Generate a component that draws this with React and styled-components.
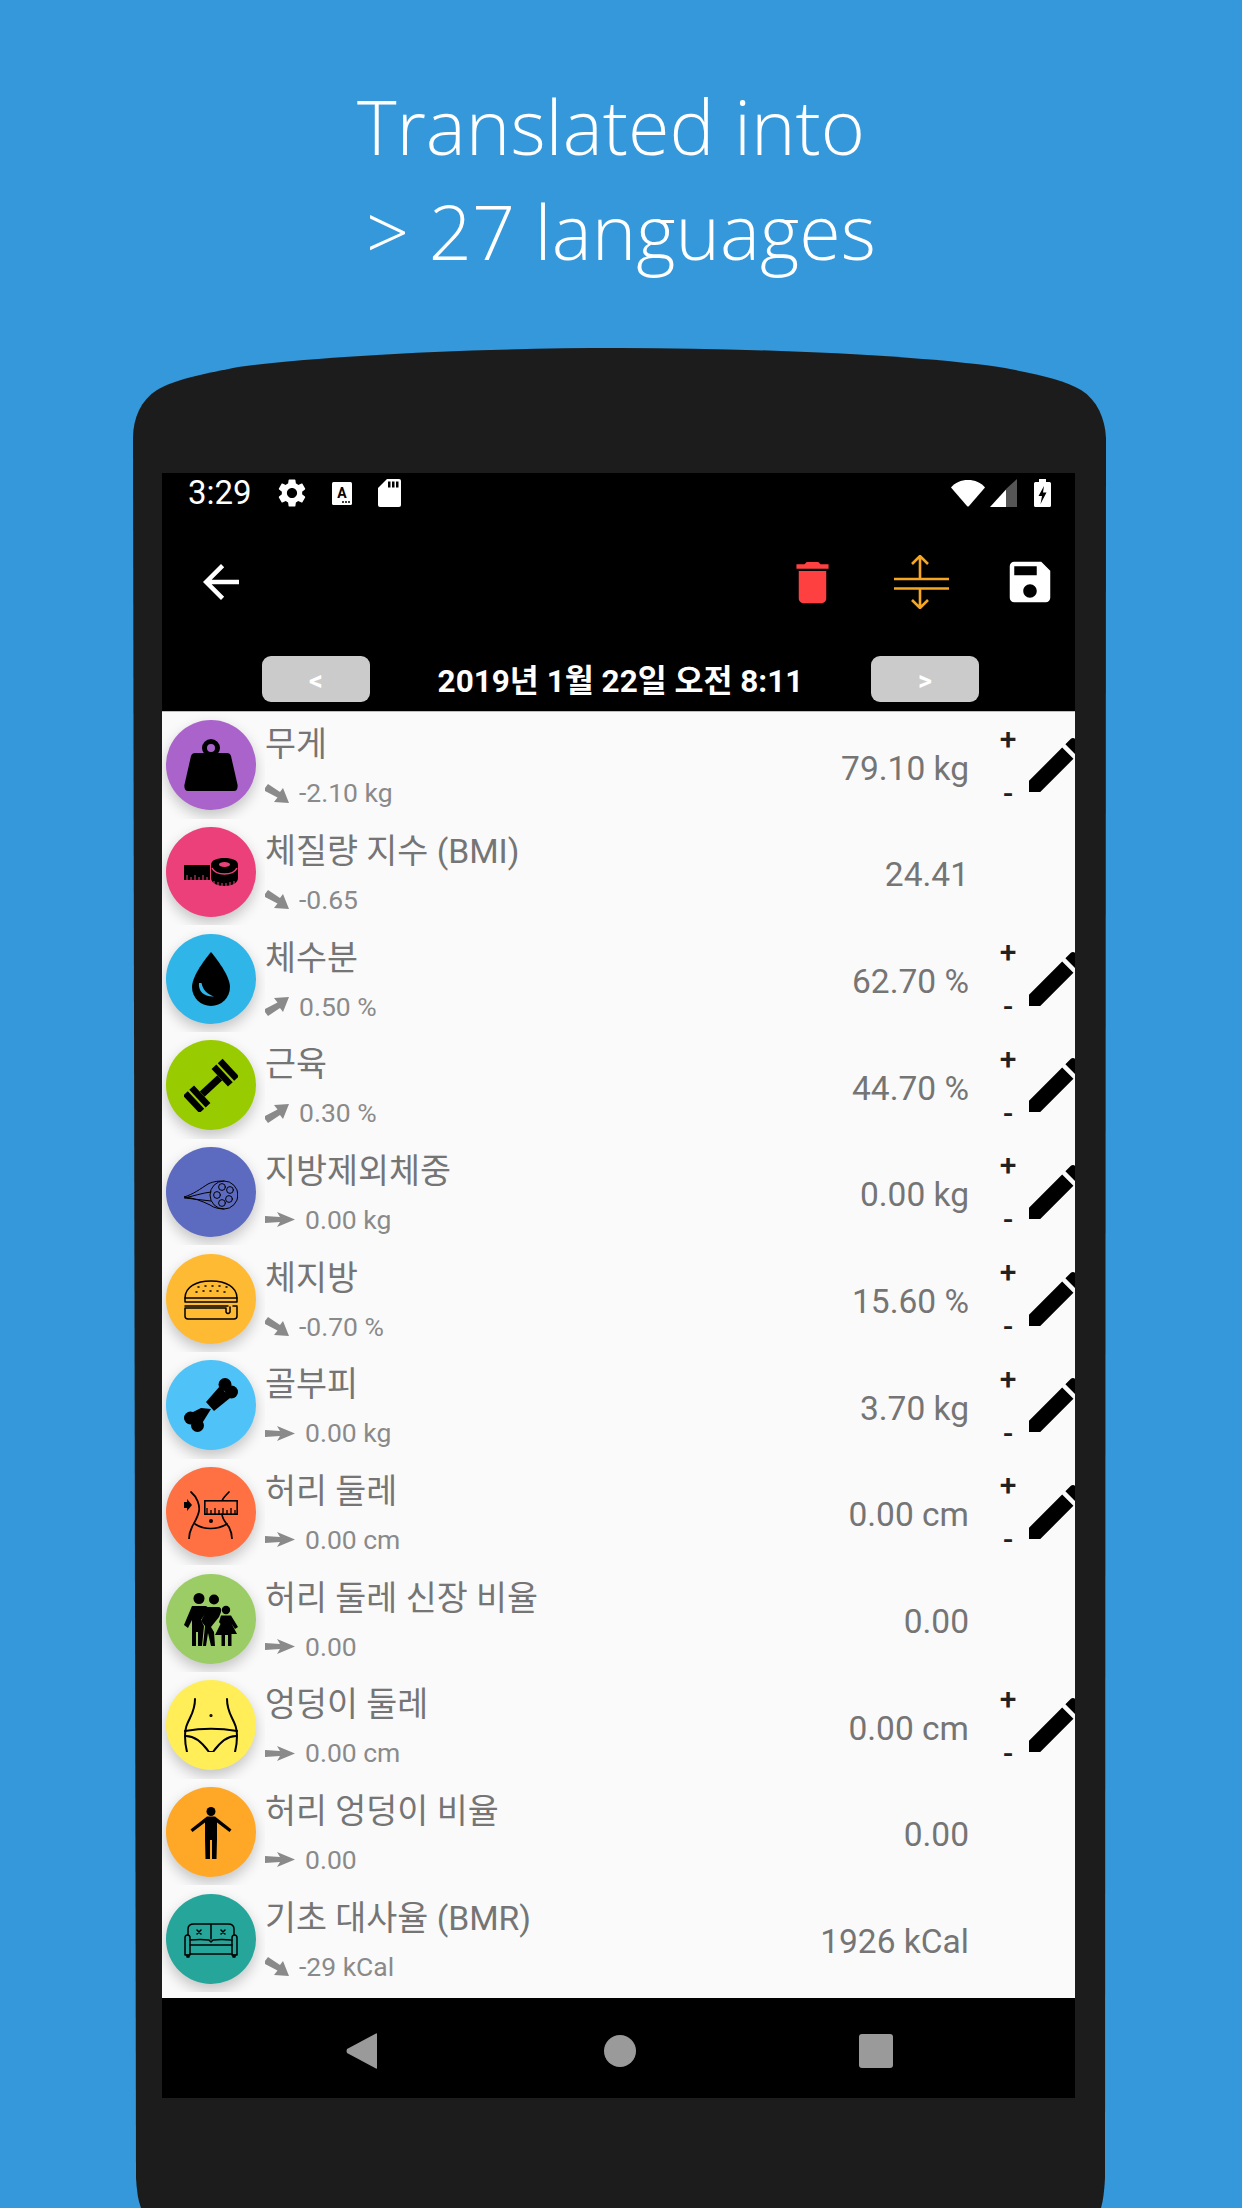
import React from 'react'
import styled, { createGlobalStyle } from 'styled-components'

const GlobalStyle = createGlobalStyle`
  html, body {
    margin: 0;
    padding: 0;
    background: #3498db;
  }
  body {
    width: 1242px;
    height: 2208px;
    overflow: hidden;
    font-family: Roboto, "Noto Sans CJK KR", sans-serif;
  }
`;

const Page = styled.div`
  width: 1242px;
  height: 2208px;
  background: #3498db;
  overflow: hidden;
  display: flex;
  flex-direction: column;
`;

const Headline = styled.header`
  height: 348px;
  flex-shrink: 0;
  padding-top: 73px;
  box-sizing: border-box;
  color: #fff;
  font-family: "Open Sans", sans-serif;
  font-weight: 300;
  font-size: 75.5px;
  line-height: 105px;
  text-align: center;
`;

const HeadLine = styled.div`
  padding-right: ${p => p.$shift || 0}px;
`;

const Phone = styled.div`
  margin-left: 133px;
  width: 973px;
  height: 1860px;
  flex-shrink: 0;
  background: #1c1c1c;
  padding: 125px 0 0 29px;
  box-sizing: border-box;
  clip-path: path('M3 1830 L0 90 C0 70 8 52 24 42 C40 32 70 26 100 20 C170 9 330 0 486 0 C642 0 802 9 872 20 C902 26 932 32 948 42 C964 52 972 70 973 90 L972 1830 Q971 1850 968 1860 L8 1860 Q4 1850 3 1830 Z');
`;

const Screen = styled.div`
  width: 913px;
  height: 1625px;
  background: #000;
  display: flex;
  flex-direction: column;
  overflow: hidden;
`;

const StatusBar = styled.div`
  height: 40px;
  flex-shrink: 0;
  display: flex;
  align-items: center;
  padding: 0 24px 0 26px;
  color: #fff;
`;

const Clock = styled.span`
  font-size: 33px;
  line-height: 40px;
  margin-right: 23px;
`;

const StatusLeft = styled.div`
  display: flex;
  align-items: center;
  gap: 23px;
`;

const StatusRight = styled.div`
  margin-left: auto;
  display: flex;
  align-items: center;
  gap: 5px;
`;

const Toolbar = styled.div`
  height: 138px;
  flex-shrink: 0;
  display: flex;
  align-items: center;
  padding: 0 18px 0 32px;
`;

const ToolActions = styled.div`
  margin-left: auto;
  display: flex;
  align-items: center;
  gap: 54px;
`;

const DateRow = styled.div`
  height: 60px;
  flex-shrink: 0;
  box-sizing: border-box;
  padding: 5px 96px 0 100px;
  display: flex;
  justify-content: space-between;
  align-items: flex-start;
`;

const DateButton = styled.div`
  width: 108px;
  height: 46px;
  background: #cbcbcb;
  border-radius: 9px;
  color: #fff;
  font-weight: 700;
  font-size: 27px;
  line-height: 50px;
  text-align: center;
`;

const DateLabel = styled.div`
  color: #fff;
  font-weight: 700;
  font-size: 31.5px;
  line-height: 46px;
  padding-top: 3px;
`;

const List = styled.div`
  flex: 1;
  background: #fafafa;
  border-top: 1px solid #bdbdbd;
`;

const Row = styled.div`
  height: 106.67px;
  display: flex;
  align-items: center;
  overflow: hidden;
`;

const IconCell = styled.div`
  width: 103px;
  height: 100%;
  flex-shrink: 0;
  overflow: hidden;
  display: flex;
  align-items: center;
  padding-left: 4px;
  box-sizing: border-box;
`;

const Circle = styled.div`
  width: 90px;
  height: 90px;
  border-radius: 50%;
  background: ${p => p.$color};
  box-shadow: 0 6px 14px rgba(0, 0, 0, 0.22);
  display: flex;
  align-items: center;
  justify-content: center;
  flex-shrink: 0;
`;

const Texts = styled.div`
  flex: 1;
  min-width: 0;
  padding-top: 6px;
`;

const Title = styled.div`
  color: #757575;
  font-size: 33.7px;
  line-height: 46px;
  padding-top: 4px;
`;

const Sub = styled.div`
  color: #8a8a8a;
  font-size: 26.5px;
  line-height: 50px;
  display: flex;
  align-items: center;
  gap: 10px;
`;

const Value = styled.div`
  color: #757575;
  font-size: 33.5px;
  padding-top: 6px;
  white-space: nowrap;
`;

const Actions = styled.div`
  width: 106px;
  height: 100%;
  flex-shrink: 0;
  box-sizing: border-box;
  padding-left: 19px;
  display: flex;
  align-items: center;
`;

const Stepper = styled.div`
  width: 40px;
  flex-shrink: 0;
  display: flex;
  flex-direction: column;
  align-items: center;
  gap: 15px;
  padding-top: 2px;
  color: #212121;
  font-size: 30px;
  font-weight: 500;
  line-height: 40px;
`;

const Pen = styled.svg`
  width: 72px;
  height: 72px;
  flex-shrink: 0;
  margin-left: -8px;
`;

const NavBar = styled.div`
  height: 100px;
  flex-shrink: 0;
  display: flex;
  align-items: center;
  padding: 6px 0 0 184px;
  box-sizing: border-box;
`;

const NavCircle = styled.div`
  width: 32px;
  height: 32px;
  border-radius: 50%;
  background: #9a9a9a;
  margin-left: 227px;
`;

const NavSquare = styled.div`
  width: 34px;
  height: 34px;
  border-radius: 3px;
  background: #9a9a9a;
  margin-left: 223px;
`;

const SdCard = styled.svg`
  margin-left: 3px;
`;

const BatteryShape = styled.svg`
  margin-left: 12px;
`;

const Glyph = ({ size, color = '#fff', d }) => (
  <svg width={size} height={size} viewBox="0 0 24 24" fill={color}><path d={d} /></svg>
);

const GEAR = 'M19.14 12.94c.04-.3.06-.61.06-.94 0-.32-.02-.64-.07-.94l2.03-1.58c.18-.14.23-.41.12-.61l-1.92-3.32c-.12-.22-.37-.29-.59-.22l-2.39.96c-.5-.38-1.03-.7-1.62-.94l-.36-2.54c-.04-.24-.24-.41-.48-.41h-3.84c-.24 0-.43.17-.47.41l-.36 2.54c-.59.24-1.13.57-1.62.94l-2.39-.96c-.22-.08-.47 0-.59.22L2.74 8.87c-.12.21-.08.47.12.61l2.03 1.58c-.05.3-.09.63-.09.94s.02.64.07.94l-2.03 1.58c-.18.14-.23.41-.12.61l1.92 3.32c.12.22.37.29.59.22l2.39-.96c.5.38 1.03.7 1.62.94l.36 2.54c.05.24.24.41.48.41h3.84c.24 0 .44-.17.47-.41l.36-2.54c.59-.24 1.13-.56 1.62-.94l2.39.96c.22.08.47 0 .59-.22l1.92-3.32c.12-.22.07-.47-.12-.61l-2.01-1.58zM12 15.6c-1.98 0-3.6-1.62-3.6-3.6s1.62-3.6 3.6-3.6 3.6 1.62 3.6 3.6-1.62 3.6-3.6 3.6z';
const BACK = 'M20 11H7.83l5.59-5.59L12 4l-8 8 8 8 1.41-1.41L7.83 13H20v-2z';
const TRASH = 'M6 19c0 1.1.9 2 2 2h8c1.1 0 2-.9 2-2V7H6v12zM19 4h-3.5l-1-1h-5l-1 1H5v2h14V4z';
const SAVE = 'M17 3H5c-1.11 0-2 .9-2 2v14c0 1.1.89 2 2 2h14c1.1 0 2-.9 2-2V7l-4-4zm-5 16c-1.66 0-3-1.34-3-3s1.34-3 3-3 3 1.34 3 3-1.34 3-3 3zm3-10H5V5h10v4z';
const EDIT = 'M3 17.25V21h3.75L17.81 9.94l-3.75-3.75L3 17.25zM20.71 7.04c.39-.39.39-1.02 0-1.41l-2.34-2.34c-.39-.39-1.02-.39-1.41 0l-1.83 1.83 3.75 3.75 1.83-1.83z';

const KeyboardIcon = () => (
  <svg width="20" height="23" viewBox="0 0 20 23">
    <rect width="20" height="23" rx="1.5" fill="#fff" />
    <text x="10" y="16" textAnchor="middle" fontFamily="Roboto" fontWeight="700" fontSize="14" fill="#000">A</text>
    <circle cx="11" cy="20" r="1" fill="#000" /><circle cx="14" cy="20" r="1" fill="#000" /><circle cx="17" cy="20" r="1" fill="#000" />
  </svg>
);

const SdIcon = () => (
  <SdCard width="23" height="28" viewBox="0 0 23 28">
    <path d="M9 0H21a2 2 0 0 1 2 2V26a2 2 0 0 1-2 2H2a2 2 0 0 1-2-2V9Z" fill="#fff" />
    <path d="M10 2.5h2.5v6H10ZM14 2.5h2.5v6H14ZM18 2.5h2.5v6H18Z" fill="#000" />
  </SdCard>
);

const WifiIcon = () => (
  <svg width="34" height="27" viewBox="0 0 34 27">
    <path d="M0 7.5C4 2.5 10 0 17 0s13 2.5 17 7.5L18 26a1.4 1.4 0 0 1-2 0Z" fill="#fff" />
  </svg>
);

const SignalIcon = () => (
  <svg width="27" height="28" viewBox="0 0 27 28">
    <path d="M27 0V28H16V10Z" fill="#555" />
    <path d="M16 10.5V28H0Z" fill="#fff" />
  </svg>
);

const BatteryIcon = () => (
  <BatteryShape width="17" height="28" viewBox="0 0 17 28">
    <path d="M5 0H12V3H15.5A1.5 1.5 0 0 1 17 4.5V26.5A1.5 1.5 0 0 1 15.5 28H1.5A1.5 1.5 0 0 1 0 26.5V4.5A1.5 1.5 0 0 1 1.5 3H5Z" fill="#fff" />
    <path d="M10 7 4.5 17H8L6.5 25 12.5 13.5H9Z" fill="#000" />
  </BatteryShape>
);

const SplitIcon = () => (
  <svg width="55" height="54" viewBox="0 0 55 54" fill="none" stroke="#f5a623" strokeWidth="2.6">
    <path d="M0 24H55M0 33.5H55" />
    <path d="M26 24V1M18 9l8-8 8 8M26 33.5V53M18 45l8 8 8-8" />
  </svg>
);

const TrendShape = styled.svg`
  transform: ${p => (p.$up ? 'scaleY(-1)' : 'none')};
`;

const Trend = ({ dir }) => {
  if (dir === 'flat') {
    return (
      <svg width="30" height="15" viewBox="0 0 30 15" fill="#8a8a8a">
        <path d="M0 4 15 5 12 0 30 7.5 12 15 15 10 0 11Z" />
      </svg>
    );
  }
  return (
    <TrendShape $up={dir === 'up'} width="24" height="19" viewBox="0 0 24 19" fill="#8a8a8a">
      <path d="M0 4 3 0 15 8 18 4 24 19 9 18 12.5 13.5 0 7Z" />
    </TrendShape>
  );
};

// circle glyphs, all on a 54 x 54 box
const s = { fill: 'none', stroke: '#000', strokeLinecap: 'round', strokeLinejoin: 'round' };

const icons = {
  weight: (
    <>
      <circle cx="27" cy="10" r="6.5" fill="none" stroke="#000" strokeWidth="5" />
      <path d="M11 15H43Q46 15 47 18L53.6 47Q54 53 50 53H4Q0 53 .4 47L7 18Q8 15 11 15Z" />
    </>
  ),
  tape: (
    <>
      <path d="M0 20H26V35H0Z" />
      <path d="M3 30v5M7 32v3M11 30v5M15 32v3M19 30v5M23 32v3" stroke="#ec407a" strokeWidth="1" />
      <path d="M27 20C27 15 33 13 40.5 13S54 15 54 20V33C54 38 48 41 40.5 41S27 38 27 33Z" />
      <path d="M28 23C30 27 35 29 40.5 29S51 27 53 23" fill="none" stroke="#ec407a" strokeWidth="1.6" />
      <ellipse cx="40.5" cy="19.5" rx="5.5" ry="2.6" fill="#ec407a" />
      <path d="M30 36v4M34 37v4M38 38v3M42 38v3M46 37v4M50 36v4" stroke="#ec407a" strokeWidth="1" />
    </>
  ),
  drop: (
    <>
      <path d="M27 0C27 0 8 22 8 35A19 19 0 0 0 46 35C46 22 27 0 27 0Z" />
      <path d="M15 31C14 39 20 45 30 44.5C23 42 19 38 17.5 31Z" fill="#2fb5e8" />
    </>
  ),
  dumbbell: (
    <g transform="rotate(-43 27 28)">
      <rect x="15" y="24.5" width="24" height="7" />
      <rect x="39" y="16" width="6.5" height="24" />
      <rect x="47.5" y="16" width="6.5" height="24" />
      <rect x="8.5" y="16" width="6.5" height="24" />
      <rect x="0" y="16" width="6.5" height="24" />
    </g>
  ),
  muscle: (
    <g {...s} strokeWidth="1">
      <circle cx="40" cy="30" r="14" />
      <path d="M0 32C10 29 16 24 24 19C30 16 36 16 40 16M0 32C10 33 18 36 26 40C30 43 36 44 40 44M0 33C10 31 18 28 27 27M1 33C10 34 18 35 27 36" />
      <circle cx="38" cy="22" r="3.4" />
      <circle cx="46" cy="25" r="3.4" />
      <circle cx="33" cy="30" r="3.4" />
      <circle cx="45" cy="34" r="3.4" />
      <circle cx="38" cy="38" r="3.4" />
    </g>
  ),
  burger: (
    <g {...s} strokeWidth="1.5">
      <path d="M1 26C1 15 12 9 27 9S53 15 53 26Z" />
      <path d="M1 26V30H53V26M1 34H44M49 34H53" />
      <path d="M1 36V44Q1 47 4 47H50Q53 47 53 44V35M1 36H42V40Q44 43 46 40V35" />
      <path d="M14 15h1M21 14h1M28 14h1M35 14h1M42 15h1M12 20h1M19 19h1M26 19h1M33 19h1M40 20h1" strokeDasharray="1 2" />
    </g>
  ),
  bone: (
    <>
      <circle cx="41" cy="6.5" r="6.5" />
      <circle cx="47.5" cy="14" r="6.5" />
      <path d="M36 8 46 20 30 33 22 24Z" />
      <circle cx="6.5" cy="40" r="6.5" />
      <circle cx="13.5" cy="47.5" r="6.5" />
      <path d="M5 36 17 30 27 31 17 47 10 48Z" />
    </>
  ),
  waist: (
    <>
      <path d="M0 17H3V14L8 20 3 26V23H0Z" />
      <g {...s} strokeWidth="1.7">
        <path d="M7 7C13 12 16 20 15 26C14 32 10 38 8 42C6 46 5 50 5 54" />
        <path d="M45 7C42 10 39 13 38.5 15M38 29C38 34 42 38 45 42C47 46 48 50 48 54" />
        <path d="M11 39C20 45 33 45 43 39" />
      </g>
      <rect x="20.8" y="15.8" width="32.4" height="13.4" fill="none" stroke="#000" strokeWidth="1.6" />
      <path d="M23 29v-6M27 29v-4M31 29v-6M35 29v-4M39 29v-6M43 29v-4M47 29v-6M51 29v-4" stroke="#000" strokeWidth="1.3" />
      <circle cx="27" cy="36" r="2" />
    </>
  ),
  family: (
    <>
      <circle cx="15" cy="6.5" r="5.5" />
      <circle cx="30" cy="7.5" r="5" />
      <circle cx="42" cy="18" r="4.2" />
      <path d="M8 14H22L25 16 17 28 20 34 18 54H14V40H12V54H8V28L4 36 0 33Z" />
      <path d="M24 15H34Q38 15 37 20L35 25 27 35 30 40 31 54H27L24 41 22 54H19L21 34 17 29Z" />
      <path d="M37 23.5H47L54 35 51 37 47.5 31.5 53 42H47.5V54H44V43H41V54H37.5V43H31L36.5 32 35 30Z" />
    </>
  ),
  hips: (
    <g {...s} strokeWidth="2">
      <path d="M11 1C11 8 9 14 6 20C3 26 1 30 1 38C1 44 2 50 3 54" />
      <path d="M43 1C43 8 45 14 48 20C51 26 53 30 53 38C53 44 52 50 51 54" />
      <path d="M1 33C18 30 36 30 53 33M2 38C10 38 18 44 25 54M52 38C44 38 36 44 29 54M25 54H29" />
      <circle cx="27" cy="17.5" r=".6" fill="#000" />
    </g>
  ),
  person: (
    <>
      <circle cx="27" cy="6.5" r="4.5" />
      <path d="M23 11.5H31L47.5 24.5 45.5 27 33 17.5V34L32.5 54H28V35H26V54H21.5L21 34V17.5L8.5 27 6.5 24.5Z" />
    </>
  ),
  sofa: (
    <g {...s} strokeWidth="1.5">
      <path d="M4 23V17Q4 12 10 12H44Q50 12 50 17V23M27 12V27" />
      <path d="M1 26Q1 23 3.5 23Q6 23 6 26V43H1ZM48 26Q48 23 50.5 23Q53 23 53 26V43H48Z" />
      <path d="M6 28Q17 27 25 28L27 30 29 28Q37 27 48 28M6 33H48M6 42H48M3 43V45H5V43M49 43V45H51V43" />
      <path d="M13 18l4 4m0-4l-4 4M37 18l4 4m0-4l-4 4" />
    </g>
  ),
};

const rows = [
  { color: '#ab63cc', icon: 'weight', title: '무게', trend: 'down', sub: '-2.10 kg', value: '79.10 kg', edit: true },
  { color: '#ec407a', icon: 'tape', title: '체질량 지수 (BMI)', trend: 'down', sub: '-0.65', value: '24.41' },
  { color: '#2fb5e8', icon: 'drop', title: '체수분', trend: 'up', sub: '0.50 %', value: '62.70 %', edit: true },
  { color: '#99cc00', icon: 'dumbbell', title: '근육', trend: 'up', sub: '0.30 %', value: '44.70 %', edit: true },
  { color: '#5c6bc0', icon: 'muscle', title: '지방제외체중', trend: 'flat', sub: '0.00 kg', value: '0.00 kg', edit: true },
  { color: '#ffba33', icon: 'burger', title: '체지방', trend: 'down', sub: '-0.70 %', value: '15.60 %', edit: true },
  { color: '#4fc3f7', icon: 'bone', title: '골부피', trend: 'flat', sub: '0.00 kg', value: '3.70 kg', edit: true },
  { color: '#ff7043', icon: 'waist', title: '허리 둘레', trend: 'flat', sub: '0.00 cm', value: '0.00 cm', edit: true },
  { color: '#9ccc65', icon: 'family', title: '허리 둘레 신장 비율', trend: 'flat', sub: '0.00', value: '0.00' },
  { color: '#ffee58', icon: 'hips', title: '엉덩이 둘레', trend: 'flat', sub: '0.00 cm', value: '0.00 cm', edit: true },
  { color: '#ffa726', icon: 'person', title: '허리 엉덩이 비율', trend: 'flat', sub: '0.00', value: '0.00' },
  { color: '#26a69a', icon: 'sofa', title: '기초 대사율 (BMR)', trend: 'down', sub: '-29 kCal', value: '1926 kCal' },
];

const MeasureRow = ({ color, icon, title, trend, sub, value, edit }) => (
  <Row>
    <IconCell>
      <Circle $color={color}>
        <svg width="54" height="54" viewBox="0 0 54 54">{icons[icon]}</svg>
      </Circle>
    </IconCell>
    <Texts>
      <Title>{title}</Title>
      <Sub><Trend dir={trend} />{sub}</Sub>
    </Texts>
    <Value>{value}</Value>
    <Actions>
      {edit && (
        <>
          <Stepper><span>+</span><span>-</span></Stepper>
          <Pen viewBox="0 0 24 24"><path d={EDIT} /></Pen>
        </>
      )}
    </Actions>
  </Row>
);

const App = () => {
  return (
    <>
      <GlobalStyle />
      <Page>
        <Headline>
          <HeadLine $shift={20}>Translated into</HeadLine>
          <HeadLine>&gt; 27 languages</HeadLine>
        </Headline>
        <Phone>
          <Screen>
            <StatusBar>
              <Clock>3:29</Clock>
              <StatusLeft>
                <Glyph size={34} d={GEAR} />
                <KeyboardIcon />
                <SdIcon />
              </StatusLeft>
              <StatusRight>
                <WifiIcon />
                <SignalIcon />
                <BatteryIcon />
              </StatusRight>
            </StatusBar>
            <Toolbar>
              <Glyph size={54} d={BACK} />
              <ToolActions>
                <Glyph size={55} color="#ff4040" d={TRASH} />
                <SplitIcon />
                <Glyph size={54} d={SAVE} />
              </ToolActions>
            </Toolbar>
            <DateRow>
              <DateButton>&lt;</DateButton>
              <DateLabel>2019년 1월 22일 오전 8:11</DateLabel>
              <DateButton>&gt;</DateButton>
            </DateRow>
            <List>
              {rows.map(r => <MeasureRow key={r.icon} {...r} />)}
            </List>
            <NavBar>
              <svg width="31" height="36" viewBox="0 0 31 36" fill="#9a9a9a">
                <path d="M31 1V35Q31 36 30 35.5L1 20Q0 18 1 16L30 .5Q31 0 31 1Z" />
              </svg>
              <NavCircle />
              <NavSquare />
            </NavBar>
          </Screen>
        </Phone>
      </Page>
    </>
  )
}

export default App
